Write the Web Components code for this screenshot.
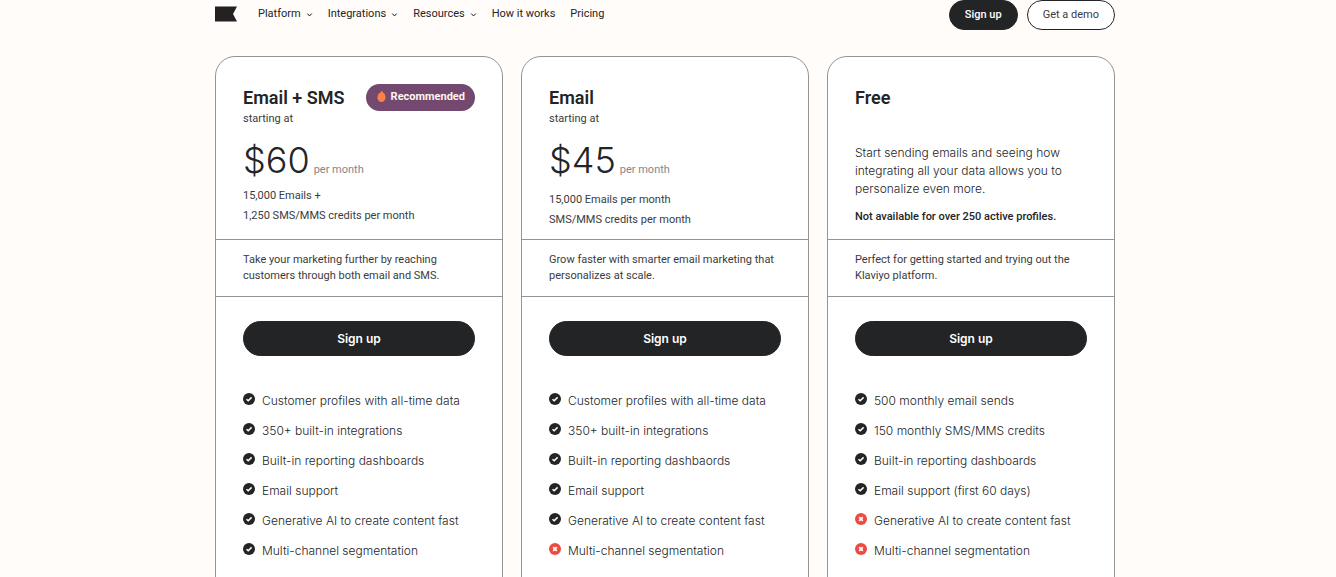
<!DOCTYPE html>
<html lang="en">
<head>
<meta charset="utf-8">
<meta name="viewport" content="width=device-width, initial-scale=1">
<title>Pricing</title>
<style>
  :root { --ink: #232426; --text: #3a3b3d; --line: #949494; --paper: #fffcf9; --wide: Inter, "Liberation Sans", sans-serif; --narrow: Roboto, "Liberation Sans", sans-serif; }
  body { margin: 0; background: var(--paper); color: var(--ink); font-family: var(--narrow); font-size: 11px; }
</style>
</head>
<body>
<pricing-page></pricing-page>

<template id="page-tpl">
  <style>
    :host { display: block; padding-right: 6px; }
    .wrap { max-width: 900px; margin: 0 auto; }
    main { display: grid; grid-template-columns: repeat(3, 1fr); grid-template-rows: repeat(3, auto); column-gap: 18px; margin-top: 26px; padding-bottom: 40px; }
  </style>
  <div class="wrap">
    <site-header></site-header>
    <main>
      <plan-card name="Email + SMS" blurb="Take your marketing further by reaching customers through both email and SMS.">
        <plan-badge slot="badge">Recommended</plan-badge>
        <plan-price slot="offer" amount="$60">15,000 Emails +<br>1,250 SMS/MMS credits per month</plan-price>
        <plan-feature>Customer profiles with all-time data</plan-feature>
        <plan-feature>350+ built-in integrations</plan-feature>
        <plan-feature>Built-in reporting dashboards</plan-feature>
        <plan-feature>Email support</plan-feature>
        <plan-feature>Generative AI to create content fast</plan-feature>
        <plan-feature>Multi-channel segmentation</plan-feature>
      </plan-card>
      <plan-card name="Email" blurb="Grow faster with smarter email marketing that personalizes at scale.">
        <plan-price slot="offer" amount="$45" spaced>15,000 Emails per month<br>SMS/MMS credits per month</plan-price>
        <plan-feature>Customer profiles with all-time data</plan-feature>
        <plan-feature>350+ built-in integrations</plan-feature>
        <plan-feature>Built-in reporting dashbaords</plan-feature>
        <plan-feature>Email support</plan-feature>
        <plan-feature>Generative AI to create content fast</plan-feature>
        <plan-feature missing>Multi-channel segmentation</plan-feature>
      </plan-card>
      <plan-card name="Free" blurb="Perfect for getting started and trying out the Klaviyo platform.">
        <plan-intro slot="offer">Start sending emails and seeing how integrating all your data allows you to personalize even more.<span slot="note">Not available for over 250 active profiles.</span></plan-intro>
        <plan-feature>500 monthly email sends</plan-feature>
        <plan-feature>150 monthly SMS/MMS credits</plan-feature>
        <plan-feature>Built-in reporting dashboards</plan-feature>
        <plan-feature>Email support (first 60 days)</plan-feature>
        <plan-feature missing>Generative AI to create content fast</plan-feature>
        <plan-feature missing>Multi-channel segmentation</plan-feature>
      </plan-card>
    </main>
  </div>
</template>

<template id="header-tpl">
  <style>
    :host { display: flex; align-items: flex-start; height: 30px; }
    .logo { display: block; padding-top: 6px; margin-right: 21px; }
    .logo svg { display: block; }
    nav { display: flex; gap: 15px; flex: 1; line-height: 28px; }
    .actions { display: flex; gap: 9px; }
  </style>
  <a class="logo" href="#" aria-label="Klaviyo home"><svg width="22" height="16" viewBox="0 0 22 16"><path d="M0 .5H22L18 8L22 15.500H0Z" fill="#232022"/></svg></a>
  <nav>
    <nav-item menu>Platform</nav-item>
    <nav-item menu>Integrations</nav-item>
    <nav-item menu>Resources</nav-item>
    <nav-item>How it works</nav-item>
    <nav-item>Pricing</nav-item>
  </nav>
  <div class="actions">
    <pill-button>Sign up</pill-button>
    <pill-button outline>Get a demo</pill-button>
  </div>
</template>

<template id="nav-tpl">
  <style>
    :host { display: block; }
    a { display: flex; align-items: center; color: var(--ink); text-decoration: none; white-space: nowrap; font-size: 11px; font-weight: 400; }
    svg { display: none; margin: 2px 0 0 5px; }
    :host([menu]) svg { display: block; }
  </style>
  <a href="#"><slot></slot><svg width="7" height="6" viewBox="0 0 7 6"><path d="M1.200 1.500L3.500 4L5.800 1.500" fill="none" stroke="#232426" stroke-width="1"/></svg></a>
</template>

<template id="button-tpl">
  <style>
    :host { display: block; }
    button { box-sizing: border-box; display: block; width: 100%; height: 30px; padding: 0 15px; border: 1px solid var(--ink); border-radius: 18px; background: var(--ink); color: #fff; font: 500 11px/26px var(--narrow); cursor: pointer; white-space: nowrap; }
    :host([outline]) button { background: #fff; color: var(--text); font-weight: 400; }
    :host([large]) button { height: 35px; font: 600 12px/26px var(--wide); }
  </style>
  <button type="button"><slot></slot></button>
</template>

<template id="badge-tpl">
  <style>
    :host { display: flex; align-items: center; gap: 5px; height: 25px; padding: 0 10px 2px 11px; border-radius: 14px; background: #73496f; color: #fff4ee; font-size: 11px; font-weight: 700; white-space: nowrap; }
  </style>
  <svg width="9" height="11" viewBox="0 0 9 11"><path d="M4.300 0C5.500.3 6.200 1 6.200 1.700C7.800 2.500 8.700 4.500 8.500 6.500C8.300 9.200 6.800 11 4.500 11C2.200 11 .5 9.200.4 6.800C.3 4.600 1.300 2.600 3 1.700C3.700 1.300 4.300.8 4.300 0Z" fill="#ff8047"/></svg><span><slot></slot></span>
</template>

<template id="card-tpl">
  <style>
    :host { display: grid; grid-template-rows: subgrid; grid-row: span 3; box-sizing: border-box; border: 1px solid var(--line); border-radius: 20px; background: #fff; }
    .offer { padding: 27px 27px 9px; }
    .title { display: flex; align-items: center; justify-content: space-between; height: 27px; }
    h2 { margin: 0; font-size: 18px; line-height: 26px; font-weight: 600; white-space: nowrap; }
    .blurb { margin: 0; padding: 12px 27px; border: solid var(--line); border-width: 1px 0; line-height: 16px; font-size: 11px; color: var(--text); }
    .body { padding: 24px 27px 40px; }
    .features { margin-top: 30px; }
  </style>
  <section class="offer">
    <div class="title"><h2></h2><slot name="badge"></slot></div>
    <slot name="offer"></slot>
  </section>
  <p class="blurb"></p>
  <section class="body">
    <pill-button large>Sign up</pill-button>
    <div class="features" role="list"><slot></slot></div>
  </section>
</template>

<template id="price-tpl">
  <style>
    :host { display: block; color: var(--text); }
    .from { line-height: 15px; font-size: 11px; }
    .price { display: flex; align-items: baseline; gap: 4px; margin-top: 14px; line-height: 40px; }
    .amount { font-family: var(--wide); font-size: 36px; font-weight: 300; color: var(--ink); }
    .per { font-size: 11px; line-height: 16px; color: #85878a; }
    .volume { margin-top: 6px; line-height: 20px; font-size: 11px; }
    :host([spaced]) .volume { margin-top: 10px; }
  </style>
  <div class="from">starting at</div>
  <div class="price"><span class="amount"></span><span class="per">per month</span></div>
  <div class="volume"><slot></slot></div>
</template>

<template id="intro-tpl">
  <style>
    :host { display: block; margin-top: 33px; color: var(--ink); }
    p { margin: 0; font-family: var(--wide); font-size: 12px; font-weight: 300; line-height: 18px; }
    .note { margin-top: 11px; font-family: var(--narrow); font-size: 11px; line-height: 16px; font-weight: 500; white-space: nowrap; }
  </style>
  <p><slot></slot></p>
  <p class="note"><slot name="note"></slot></p>
</template>

<template id="feature-tpl">
  <style>
    :host { display: flex; gap: 7px; line-height: 30px; font-family: var(--wide); font-size: 12px; font-weight: 300; color: var(--ink); white-space: nowrap; }
    svg { flex: none; margin-top: 7px; }
    .cross, :host([missing]) .check { display: none; }
    :host([missing]) .cross { display: block; }
  </style>
  <svg class="check" width="12" height="12" viewBox="0 0 12 12"><circle cx="6" cy="6" r="6" fill="#232426"/><path d="M3.500 6.200L5.200 7.800L8.600 4.400" fill="none" stroke="#fff" stroke-width="1.500"/></svg>
  <svg class="cross" width="12" height="12" viewBox="0 0 12 12"><circle cx="6" cy="6" r="6" fill="#ed4b42"/><path d="M4.200 4.200L7.800 7.800M7.800 4.200L4.200 7.800" fill="none" stroke="#fff" stroke-width="1.700"/></svg>
  <span><slot></slot></span>
</template>

<script>
  class TemplateElement extends HTMLElement {
    constructor() {
      super();
      const tpl = document.getElementById(this.constructor.template);
      this.attachShadow({ mode: "open" }).append(tpl.content.cloneNode(true));
    }
    fill(selector, attribute) {
      this.shadowRoot.querySelector(selector).textContent = this.getAttribute(attribute) || "";
    }
  }
  class NavItem extends TemplateElement { static template = "nav-tpl"; }
  class PillButton extends TemplateElement { static template = "button-tpl"; }
  class PlanBadge extends TemplateElement { static template = "badge-tpl"; }
  class PlanIntro extends TemplateElement { static template = "intro-tpl"; }
  class PlanFeature extends TemplateElement {
    static template = "feature-tpl";
    connectedCallback() { this.setAttribute("role", "listitem"); }
  }
  class PlanPrice extends TemplateElement {
    static template = "price-tpl";
    connectedCallback() { this.fill(".amount", "amount"); }
  }
  class PlanCard extends TemplateElement {
    static template = "card-tpl";
    connectedCallback() { this.fill("h2", "name"); this.fill(".blurb", "blurb"); }
  }
  class SiteHeader extends TemplateElement { static template = "header-tpl"; }
  class PricingPage extends TemplateElement { static template = "page-tpl"; }

  customElements.define("nav-item", NavItem);
  customElements.define("pill-button", PillButton);
  customElements.define("plan-badge", PlanBadge);
  customElements.define("plan-intro", PlanIntro);
  customElements.define("plan-feature", PlanFeature);
  customElements.define("plan-price", PlanPrice);
  customElements.define("plan-card", PlanCard);
  customElements.define("site-header", SiteHeader);
  customElements.define("pricing-page", PricingPage);
</script>
</body>
</html>
